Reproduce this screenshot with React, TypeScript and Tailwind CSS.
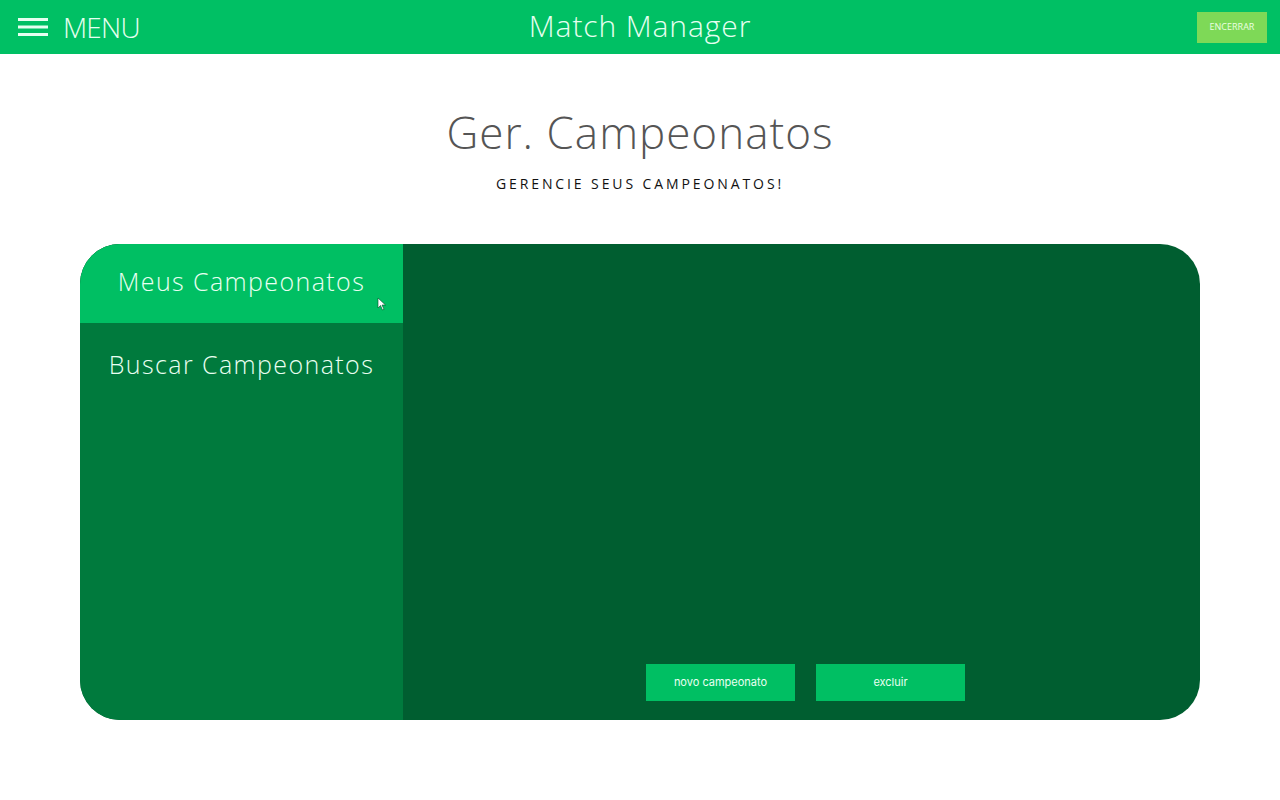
import React, { useState } from "react";

const tabs = ["Meus Campeonatos", "Buscar Campeonatos"];

export default function App() {
  const [active, setActive] = useState(0);

  return (
    <div className="min-h-screen w-full bg-white font-['Open_Sans',sans-serif]">
      {/* HEADER */}
      <header className="h-[54px] bg-[#00c064] flex items-center justify-between px-[18px] relative">
        <button className="flex items-center gap-[15px] text-[#e6fff0]">
          <svg width="30" height="20" viewBox="0 0 30 20">
            <rect x="0" y="1" width="30" height="3" fill="currentColor" />
            <rect x="0" y="8.5" width="30" height="3" fill="currentColor" />
            <rect x="0" y="16" width="30" height="3" fill="currentColor" />
          </svg>
          <span className="text-[28px] font-light leading-none tracking-[-0.8px]">MENU</span>
        </button>
        <h1 className="absolute left-1/2 -translate-x-1/2 top-[3px] text-[30px] font-light text-[#e6fff0] tracking-[0.9px] whitespace-nowrap">
          Match Manager
        </h1>
        <button className="w-[70px] h-[31px] bg-[#7ed957] text-[9px] text-[#eaffe0] -mr-[5px]">
          ENCERRAR
        </button>
      </header>

      {/* TITLE */}
      <div className="flex flex-col items-center pt-[56px]">
        <h2 className="text-[44px] font-light text-[#555555] leading-none tracking-[1px] mb-[19px]">
          Ger. Campeonatos
        </h2>
        <p className="text-[14px] tracking-[2.9px] text-[#111111]">GERENCIE SEUS CAMPEONATOS!</p>
      </div>

      {/* CARD */}
      <div className="mx-[80px] mt-[50px] h-[476px] rounded-[40px] overflow-hidden flex bg-[#005e30]">
        <aside className="w-[323px] bg-[#007a3d] flex flex-col">
          {tabs.map((t, i) => (
            <button
              key={t}
              onClick={() => setActive(i)}
              className={`h-[79px] text-[25px] font-light tracking-[1.4px] text-[#eafff2] relative ${
                active === i ? "bg-[#00bf63] pb-[4px]" : "pt-[4px]"
              }`}
            >
              {t}
              {active === i && (
                <svg
                  className="absolute left-[297px] top-[53px]"
                  width="10"
                  height="14"
                  viewBox="0 0 10 14"
                >
                  <path d="M1 1 L1 11 L3.5 8.5 L5.5 13 L7 12.3 L5 8 L8.5 8 Z" fill="#ffffff" stroke="#004d26" strokeWidth="0.6" />
                </svg>
              )}
            </button>
          ))}
        </aside>
        <main className="flex-1 flex items-end justify-center gap-[21px] pb-[19px] pl-[8px]">
          <button className="w-[149px] h-[37px] bg-[#00bf63] text-[11px] text-[#eafff2] font-['Inter',sans-serif]">
            novo campeonato
          </button>
          <button className="w-[149px] h-[37px] bg-[#00bf63] text-[11px] text-[#eafff2] font-['Inter',sans-serif]">
            excluir
          </button>
        </main>
      </div>
    </div>
  );
}
